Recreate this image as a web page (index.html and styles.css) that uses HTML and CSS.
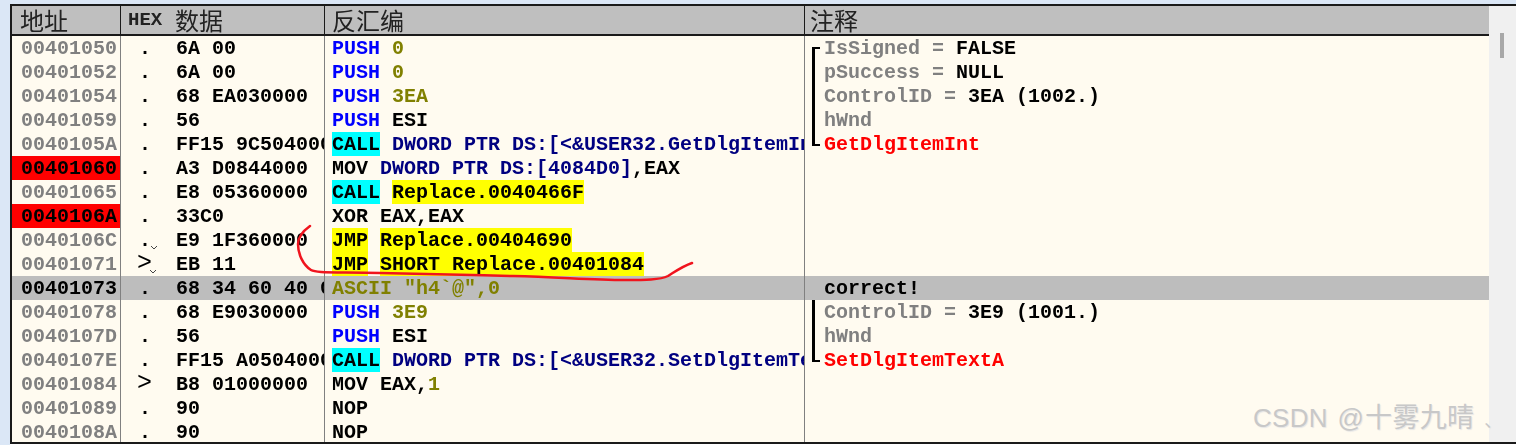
FILE: index.html
```html
<!DOCTYPE html>
<html lang="zh">
<head>
<meta charset="utf-8">
<title>反汇编</title>
<link rel="stylesheet" href="styles.css">
</head>
<body>
<main class="window">
  <section class="table">
    <header class="row head">
      <div class="c addr">地址</div>
      <div class="c hex"><b class="hexlabel">HEX</b><span>数据</span></div>
      <div class="c dis">反汇编</div>
      <div class="c note">注释</div>
    </header>
    <div class="row"><div class="c addr">00401050</div><div class="c hex"><span class="mark">.</span>6A 00</div><div class="c dis"><i class="blue">PUSH</i> <i class="olive">0</i></div><div class="c note"><span class="brk top"></span><span><i class="gray">IsSigned = </i>FALSE</span></div></div>
    <div class="row"><div class="c addr">00401052</div><div class="c hex"><span class="mark">.</span>6A 00</div><div class="c dis"><i class="blue">PUSH</i> <i class="olive">0</i></div><div class="c note"><span class="brk"></span><span><i class="gray">pSuccess = </i>NULL</span></div></div>
    <div class="row"><div class="c addr">00401054</div><div class="c hex"><span class="mark">.</span>68 EA030000</div><div class="c dis"><i class="blue">PUSH</i> <i class="olive">3EA</i></div><div class="c note"><span class="brk"></span><span><i class="gray">ControlID = </i>3EA (1002.)</span></div></div>
    <div class="row"><div class="c addr">00401059</div><div class="c hex"><span class="mark">.</span>56</div><div class="c dis"><i class="blue">PUSH</i> ESI</div><div class="c note"><span class="brk"></span><i class="gray">hWnd</i></div></div>
    <div class="row"><div class="c addr">0040105A</div><div class="c hex"><span class="mark">.</span>FF15 9C504000</div><div class="c dis"><i class="cyan">CALL</i> <i class="navy">DWORD PTR DS:[&lt;&amp;USER32.GetDlgItemInt&gt;]</i></div><div class="c note"><span class="brk end"></span><i class="red">GetDlgItemInt</i></div></div>
    <div class="row"><div class="c addr bp">00401060</div><div class="c hex"><span class="mark">.</span>A3 D0844000</div><div class="c dis">MOV <i class="navy">DWORD PTR DS:[4084D0]</i>,EAX</div><div class="c note"></div></div>
    <div class="row"><div class="c addr">00401065</div><div class="c hex"><span class="mark">.</span>E8 05360000</div><div class="c dis"><i class="cyan">CALL</i> <i class="yellow">Replace.0040466F</i></div><div class="c note"></div></div>
    <div class="row"><div class="c addr bp">0040106A</div><div class="c hex"><span class="mark">.</span>33C0</div><div class="c dis">XOR EAX,EAX</div><div class="c note"></div></div>
    <div class="row"><div class="c addr">0040106C</div><div class="c hex"><span class="mark">.<svg class="chev" viewBox="0 0 8 5"><path d="M1 1l3 3 3-3"/></svg></span>E9 1F360000</div><div class="c dis"><i class="yellow">JMP</i> <i class="yellow">Replace.00404690</i></div><div class="c note"></div></div>
    <div class="row"><div class="c addr">00401071</div><div class="c hex"><span class="mark thin">&gt;<svg class="chev" viewBox="0 0 8 5"><path d="M1 1l3 3 3-3"/></svg></span>EB 11</div><div class="c dis"><i class="yellow">JMP</i> <i class="yellow">SHORT Replace.00401084</i></div><div class="c note"></div></div>
    <div class="row sel"><div class="c addr">00401073</div><div class="c hex"><span class="mark">.</span>68 34 60 40 00</div><div class="c dis"><i class="olive">ASCII "h4`@",0</i></div><div class="c note"><span class="brk none"></span>correct!</div></div>
    <div class="row"><div class="c addr">00401078</div><div class="c hex"><span class="mark">.</span>68 E9030000</div><div class="c dis"><i class="blue">PUSH</i> <i class="olive">3E9</i></div><div class="c note"><span class="brk"></span><span><i class="gray">ControlID = </i>3E9 (1001.)</span></div></div>
    <div class="row"><div class="c addr">0040107D</div><div class="c hex"><span class="mark">.</span>56</div><div class="c dis"><i class="blue">PUSH</i> ESI</div><div class="c note"><span class="brk"></span><i class="gray">hWnd</i></div></div>
    <div class="row"><div class="c addr">0040107E</div><div class="c hex"><span class="mark">.</span>FF15 A0504000</div><div class="c dis"><i class="cyan">CALL</i> <i class="navy">DWORD PTR DS:[&lt;&amp;USER32.SetDlgItemTextA&gt;]</i></div><div class="c note"><span class="brk end"></span><i class="red">SetDlgItemTextA</i></div></div>
    <div class="row"><div class="c addr">00401084</div><div class="c hex"><span class="mark thin">&gt;</span>B8 01000000</div><div class="c dis">MOV EAX,<i class="olive">1</i></div><div class="c note"></div></div>
    <div class="row"><div class="c addr">00401089</div><div class="c hex"><span class="mark">.</span>90</div><div class="c dis">NOP</div><div class="c note"></div></div>
    <div class="row"><div class="c addr">0040108A</div><div class="c hex"><span class="mark">.</span>90</div><div class="c dis">NOP</div><div class="c note"></div></div>
  </section>
  <aside class="scroll"><div class="thumb"></div></aside>
  <div class="wm">CSDN <span class="wm-at">@</span><span class="wm-cjk">十雾九晴</span><span class="wm-tail">、</span></div>
  <svg class="ink" viewBox="0 0 1516 445" aria-hidden="true"><path d="M310 226C303 231 298 237 298 244C298 254 303 265 311 270C316 273 330 272 380 273C430 274 470 275 513 276C560 277 590 280 625 280C645 280 660 280 668 276C676 271 683 266 692 263"/></svg>
</main>
</body>
</html>
```
FILE: styles.css
```css
html, body { margin: 0; height: 445px; overflow: hidden; background: #fff; }
body {
  padding: 4px 0 0 10px;
  box-sizing: border-box;
  background: linear-gradient(#dbe7f6, #dbe7f6) left top / 100% 4px no-repeat, linear-gradient(#dbe7f6, #dbe7f6) left top / 10px 100% no-repeat, #fff;
}
.window {
  display: flex;
  width: 1506px;
  height: 440px;
  box-sizing: border-box;
  border: solid #1a1a1a;
  border-width: 2px 0 2px 2px;
  overflow: hidden;
  background: #fffbf0;
}
.table { width: 1477px; flex: none; filter: blur(0.35px); }
.row {
  display: grid;
  grid-template-columns: 109px 204px 480px 684px;
  height: 24px;
  font: bold 20px/26px "Liberation Mono", "DejaVu Sans Mono", monospace;
  color: #000;
  white-space: pre;
}
.c { overflow: hidden; border-right: 1px solid #808080; box-sizing: border-box; height: 24px; }
.row i { font-style: normal; }
.addr { padding-left: 9px; color: #808080; }
.hex { display: flex; padding-left: 18px; }
.dis { padding-left: 7px; }
.note { display: flex; padding-left: 7px; border-right: 0; }
.bp { background: #ff0000; color: #000; }
.sel { background: #bdbdbd; }
.sel .addr { color: #000; }
.mark { display: flex; flex: none; width: 37px; align-items: flex-start; }
.thin { font-weight: normal; font-size: 25px; line-height: 24px; width: 37px; margin-left: -2px; margin-right: 2px; }
.chev { width: 8px; height: 5px; margin: 17px 0 0 -1px; fill: none; stroke: #444; stroke-width: 1; }
.thin .chev { margin-left: -3px; }
.blue { color: #0000ff; }
.navy { color: #000080; }
.olive { color: #808000; }
.gray { color: #808080; }
.red { color: #ff0000; }
.cyan, .yellow { display: inline-block; height: 24px; vertical-align: top; }
.cyan { background: #00ffff; }
.yellow { background: #ffff00; }
.brk {
  flex: none;
  box-sizing: border-box;
  width: 8px;
  margin-right: 4px;
  border-left: 3px solid #000;
}
.brk.top { margin-top: 11px; border-top: 2px solid #000; }
.brk.end { margin-bottom: 10px; border-bottom: 2px solid #000; }
.brk.none { border: 0; }
.head {
  height: 28px;
  background: #bfbfbf;
  border-bottom: 2px solid #1a1a1a;
  box-sizing: content-box;
  font: 24px/28px "Noto Sans CJK SC", sans-serif;
  color: #222;
}
.head .c { height: 28px; overflow: visible; padding-left: 7px; border-right-color: #1a1a1a; color: #222; }
.head .addr { padding-left: 8px; }
.head .hex { padding-left: 7px; }
.head .note { padding-left: 5px; }
.hexlabel { font: bold 19px/28px "Liberation Mono", monospace; width: 47px; flex: none; }
.scroll { flex: 1; background: #f0f0f0; padding: 27px 0 0 11px; }
.thumb { width: 4px; height: 25px; background: #a8a8a8; }
.wm {
  position: absolute;
  left: 1253px;
  top: 402px;
  font: 26px/32px "Liberation Sans", "Noto Sans CJK SC", sans-serif;
  letter-spacing: 0.3px;
  color: #c8c8c8;
  text-shadow: 1px 1px 1px #e6e6e6;
  white-space: pre;
}
.wm-at { margin-left: 2px; }
.wm-cjk { font-size: 27px; margin-left: 1px; }
.wm-tail { font-size: 18px; margin-left: 10px; }
.ink { position: absolute; left: 0; top: 0; width: 1516px; height: 445px; fill: none; stroke: #f0141e; stroke-width: 2.5; stroke-linecap: round; pointer-events: none; }
```
